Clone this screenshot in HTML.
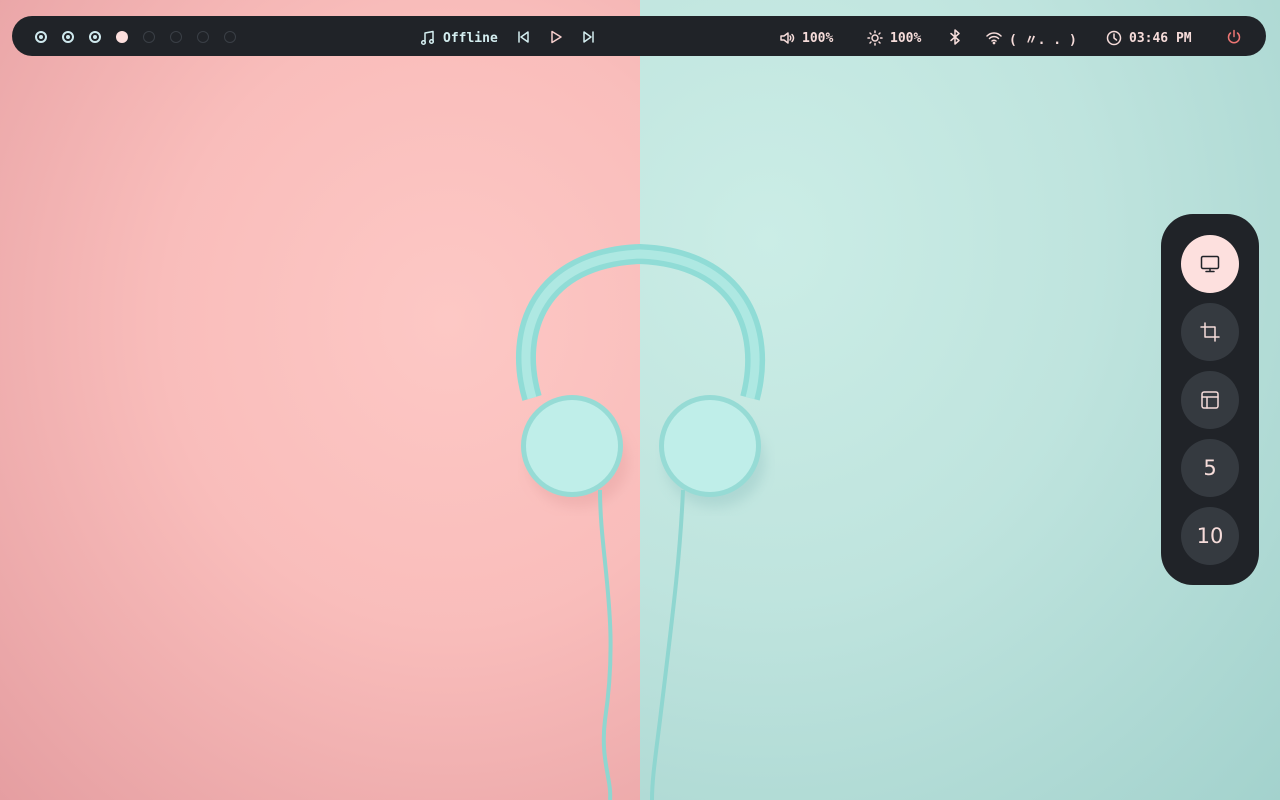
<!DOCTYPE html>
<html><head><meta charset="utf-8"><style>
*{margin:0;padding:0;box-sizing:border-box}
body{width:1280px;height:800px;overflow:hidden;position:relative;font-family:"DejaVu Sans Mono","Liberation Mono",monospace;}
.l{position:absolute;left:0;top:0;width:640px;height:800px;background:radial-gradient(ellipse at 70% 40%,#fdc8c5 0%,#f9bdbb 45%,#e59ea1 100%)}
.r{position:absolute;left:640px;top:0;width:640px;height:800px;background:radial-gradient(ellipse at 20% 30%,#cbede6 0%,#bfe4de 45%,#a3d2cd 100%)}
.bar{position:absolute;left:12px;top:16px;width:1254px;height:40px;border-radius:20px;background:#202328;color:#f6dcda;font-size:13px;font-weight:bold}
.bar .it{position:absolute;top:2px;height:40px;display:flex;align-items:center;gap:7px}
.ws{position:absolute;top:15px;width:12px;height:12px;border-radius:50%}
.panel{position:absolute;left:1161px;top:214px;width:98px;height:371px;border-radius:32px;background:#202328}
.btn{position:absolute;left:20px;width:58px;height:58px;border-radius:50%;background:#353a40;display:flex;align-items:center;justify-content:center;color:#f6dcda;font-family:"DejaVu Sans",sans-serif;font-size:21px}
svg.i{fill:none;stroke:currentColor;stroke-width:1.5;stroke-linecap:round;stroke-linejoin:round}
</style></head><body>
<div class="l"></div><div class="r"></div>
<svg style="position:absolute;left:0;top:0" width="1280" height="800">
<defs><filter id="b"><feGaussianBlur stdDeviation="6"/></filter></defs>
<ellipse cx="578" cy="462" rx="50" ry="45" fill="#d99" opacity=".35" filter="url(#b)"/>
<ellipse cx="715" cy="462" rx="50" ry="45" fill="#8bb" opacity=".35" filter="url(#b)"/>
<path d="M532,398 C512,330 540,258 640,254 C740,258 768,330 750,398" stroke="#90dcd6" stroke-width="20" fill="none"/>
<path d="M532,398 C512,330 540,258 640,254 C740,258 768,330 750,398" stroke="#aee8e2" stroke-width="9" fill="none"/>
<circle cx="572" cy="446" r="51" fill="#96dbd5"/><circle cx="572" cy="446" r="46" fill="#bfeee9"/>
<circle cx="710" cy="446" r="51" fill="#96dbd5"/><circle cx="710" cy="446" r="46" fill="#bfeee9"/>
<path d="M600,490 C600,560 620,620 605,720 C600,760 612,780 610,800" stroke="#8fd6d0" stroke-width="4" fill="none"/>
<path d="M683,490 C680,560 672,620 660,720 C655,760 652,780 652,800" stroke="#8fd6d0" stroke-width="4" fill="none"/>
</svg>
<div class="bar">
 <div class="ws" style="left:23px;border:2px solid #cfe9ee"><div style="margin:2px;width:4px;height:4px;border-radius:50%;background:#cfe9ee"></div></div>
 <div class="ws" style="left:50px;border:2px solid #cfe9ee"><div style="margin:2px;width:4px;height:4px;border-radius:50%;background:#cfe9ee"></div></div>
 <div class="ws" style="left:77px;border:2px solid #cfe9ee"><div style="margin:2px;width:4px;height:4px;border-radius:50%;background:#cfe9ee"></div></div>
 <div class="ws" style="left:104px;background:#fde0de"></div>
 <div class="ws" style="left:131px;border:1.5px solid #3a3f46"></div>
 <div class="ws" style="left:158px;border:1.5px solid #3a3f46"></div>
 <div class="ws" style="left:185px;border:1.5px solid #3a3f46"></div>
 <div class="ws" style="left:212px;border:1.5px solid #3a3f46"></div>
 <div class="it" style="left:408px;color:#d4eef0"><svg class="i" width="16" height="16" viewBox="0 0 16 16"><path d="M5 12V3l8-1.5V11"/><circle cx="3.5" cy="12.5" r="1.8"/><circle cx="11.5" cy="11.5" r="1.8"/></svg>Offline</div>
 <svg class="i" style="position:absolute;left:505px;top:14px;color:#d4eef0" width="14" height="14" viewBox="0 0 14 14"><path d="M2 2v10M11 2L4 7l7 5z"/></svg>
 <svg class="i" style="position:absolute;left:537px;top:14px;color:#f6cfcd" width="14" height="14" viewBox="0 0 14 14"><path d="M3 1.5l9 5.5-9 5.5z"/></svg>
 <svg class="i" style="position:absolute;left:569px;top:14px;color:#d4eef0" width="14" height="14" viewBox="0 0 14 14"><path d="M12 2v10M3 2l7 5-7 5z"/></svg>
 <div class="it" style="left:767px"><svg class="i" width="16" height="16" viewBox="0 0 16 16"><path d="M2 6h3l4-3v10l-4-3H2z"/><path d="M11 6c1 1 1 3 0 4M13 4.5c2 2 2 5 0 7"/></svg>100%</div>
 <div class="it" style="left:855px"><svg class="i" width="16" height="16" viewBox="0 0 16 16"><circle cx="8" cy="8" r="3"/><path d="M8 1v1.5M8 13.5V15M1 8h1.5M13.5 8H15M3 3l1 1M12 12l1 1M3 13l1-1M12 4l1-1"/></svg>100%</div>
 <svg class="i" style="position:absolute;left:936px;top:13px;color:#f6dcda" width="14" height="16" viewBox="0 0 14 16"><path d="M3 4.5l8 7-4 3.5V1l4 3.5-8 7"/></svg>
 <div class="it" style="left:974px"><svg class="i" width="16" height="16" viewBox="0 0 16 16"><path d="M1 6c4-4 10-4 14 0M3.5 8.5c2.5-2.5 6.5-2.5 9 0M6 11c1-1 3-1 4 0"/><circle cx="8" cy="13" r=".6"/></svg>( 〃. . )</div>
 <div class="it" style="left:1094px"><svg class="i" width="16" height="16" viewBox="0 0 16 16"><circle cx="8" cy="8" r="6.5"/><path d="M8 4v4l2.5 2"/></svg>03:46 PM</div>
 <svg class="i" style="position:absolute;left:1214px;top:13px;color:#ee7674" width="16" height="16" viewBox="0 0 16 16"><path d="M8 1.5v6M4.5 4a5.5 5.5 0 1 0 7 0"/></svg>
</div>
<div class="panel">
 <div class="btn" style="top:21px;background:#fde0de;color:#202328"><svg class="i" width="22" height="22" viewBox="0 0 22 22"><rect x="2.5" y="3.5" width="17" height="12" rx="1.5"/><path d="M11 15.5v3M7 18.5h8"/></svg></div>
 <div class="btn" style="top:89px"><svg class="i" width="22" height="22" viewBox="0 0 22 22"><path d="M6 2v14h14M2 6h14v14"/></svg></div>
 <div class="btn" style="top:157px"><svg class="i" width="22" height="22" viewBox="0 0 22 22"><rect x="3" y="3" width="16" height="16" rx="2"/><path d="M3 8h16M8 8v11"/></svg></div>
 <div class="btn" style="top:225px">5</div>
 <div class="btn" style="top:293px">10</div>
</div>
</body></html>
